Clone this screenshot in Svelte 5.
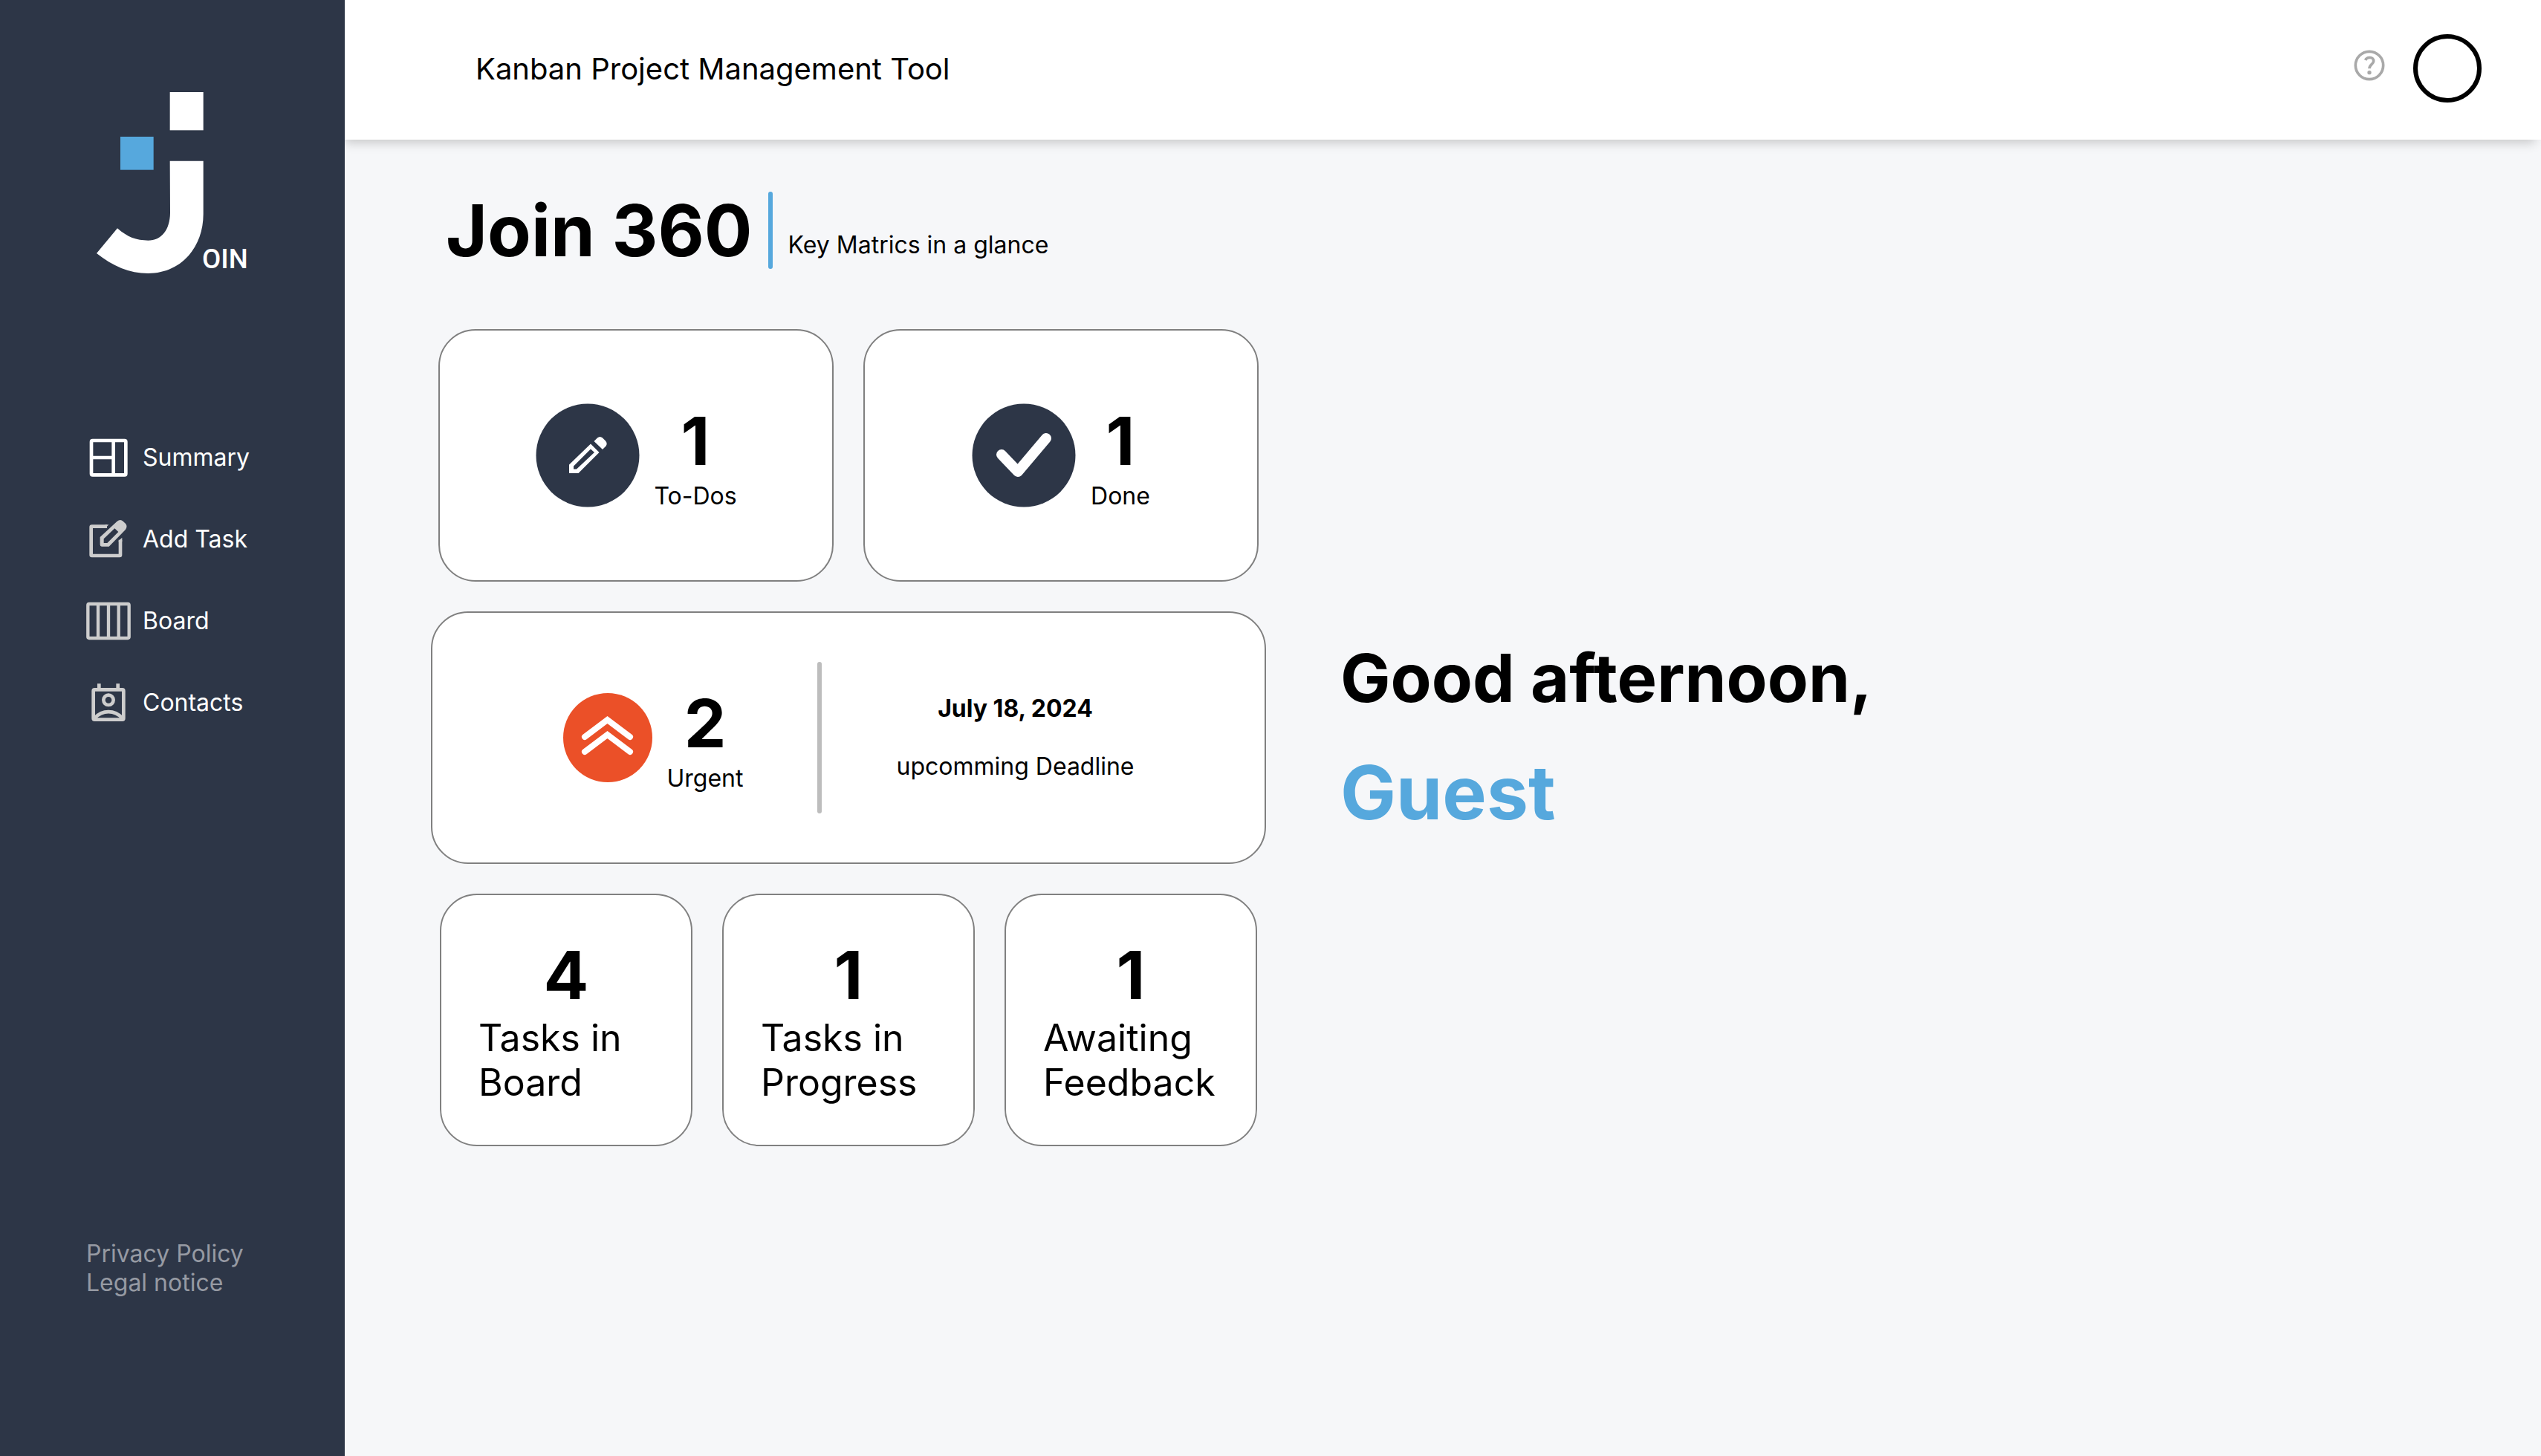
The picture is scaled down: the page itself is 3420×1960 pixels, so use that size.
<script>
  const nav = [
    { id: 'summary', label: 'Summary', box: '78 78 180 180' },
    { id: 'add', label: 'Add Task', box: '78 408 180 180' },
    { id: 'board', label: 'Board', box: '78 738 180 180' },
    { id: 'contacts', label: 'Contacts', box: '78 1068 180 180' }
  ];

  const totals = [
    { count: 4, label: 'Tasks in Board' },
    { count: 1, label: 'Tasks in Progress' },
    { count: 1, label: 'Awaiting Feedback' }
  ];
</script>

<div class="app">
  <aside class="sidebar">
    <svg class="logo" viewBox="90 72 630 780" role="img" aria-label="Join">
      <rect x="386" y="72" width="135" height="154" fill="#fff" />
      <rect x="186" y="252" width="134" height="134" fill="#56a8dd" />
      <path
        fill="#fff"
        d="M386 350H521V565C521 700 430 804 298 804C222 804 155 774 90 723L174 622C215 658 250 671 298 671C352 671 386 628 387 560Z"
      />
      <text x="516" y="784" class="logo-text">OIN</text>
    </svg>

    <nav class="nav">
      {#each nav as item}
        <a href="#{item.id}" class="nav-link">
          <svg class="nav-icon" viewBox={item.box} fill="none" aria-hidden="true">
            {#if item.id === 'summary'}
              <g stroke="#fff" stroke-width="14">
                <rect x="99" y="99" width="139" height="139" rx="5" />
                <path d="M188 99V238M99 168H188" />
              </g>
            {:else if item.id === 'add'}
              <path
                d="M162 446H101Q98 446 98 449V561Q98 564 101 564H213Q216 564 216 561V500"
                stroke="#cdcdcd"
                stroke-width="14"
              />
              <path fill="#cdcdcd" d="M155 453L169 439H155ZM209 507V504L223 491V507Z" />
              <path
                fill="#cdcdcd"
                fill-rule="evenodd"
                d="M134 489L203 425Q216 415 227 425L238 436Q246 447 236 460L170 527H141Q134 527 134 520ZM149 496V513H163L208 468L193 454Z"
              />
            {:else if item.id === 'board'}
              <g stroke="#cdcdcd" stroke-width="13">
                <rect x="85" y="759" width="166" height="138" rx="5" />
                <path d="M126 759V897M168 759V897M209 759V897" />
              </g>
            {:else}
              <g stroke="#cdcdcd" stroke-width="14">
                <rect x="107" y="1105" width="122" height="121" rx="5" />
                <path d="M130 1081V1105M206 1081V1105" />
                <circle cx="168" cy="1147" r="20" />
                <path d="M112 1220C144 1186 192 1186 224 1220" />
              </g>
            {/if}
          </svg>
          <span>{item.label}</span>
        </a>
      {/each}
    </nav>

    <footer class="legal">
      <a href="#privacy">Privacy Policy</a>
      <a href="#legal">Legal notice</a>
    </footer>
  </aside>

  <div class="page">
    <header class="topbar">
      <span class="app-title">Kanban Project Management Tool</span>
      <div class="actions">
        <button class="help" type="button" aria-label="Help">
          <svg viewBox="144 143 126 126" fill="none" stroke="#a9a9a9" stroke-width="11" aria-hidden="true">
            <circle cx="207" cy="206" r="56" />
            <path d="M191 185C197 170 225 171 224 189C223 202 207 203 207 219" />
            <circle cx="207" cy="235" r="8" fill="#a9a9a9" stroke="none" />
          </svg>
        </button>
        <button class="avatar" type="button" aria-label="Account"></button>
      </div>
    </header>

    <main class="main">
      <div class="heading">
        <h1>Join 360</h1>
        <span class="heading-bar"></span>
        <p>Key Matrics in a glance</p>
      </div>

      <div class="content">
        <section class="board">
          <div class="row">
            <a class="card medium" href="#todo">
              <svg class="badge" viewBox="0 0 140 140" aria-hidden="true">
                <circle cx="71" cy="70" r="69.5" fill="#2d3647" />
                <path
                  fill="#fff"
                  fill-rule="evenodd"
                  d="M46 94V82.5L75 54.5L86.5 66L58.5 94ZM52 84.5V88.5H56L80 66L75 61.5Z"
                />
                <path fill="#fff" d="M79.5 51L84 46.5Q87.5 43.5 91 46.5L95 50.5Q98 54 95.5 57.5L91 62Z" />
              </svg>
              <div class="stat">
                <strong>1</strong>
                <span>To-Dos</span>
              </div>
            </a>
            <a class="card medium" href="#done">
              <svg class="badge" viewBox="0 0 140 140" aria-hidden="true">
                <circle cx="70" cy="70" r="69.5" fill="#2d3647" />
                <path
                  d="M40 69L62 92L100 47"
                  fill="none"
                  stroke="#fff"
                  stroke-width="14"
                  stroke-linecap="round"
                  stroke-linejoin="round"
                />
              </svg>
              <div class="stat">
                <strong>1</strong>
                <span>Done</span>
              </div>
            </a>
          </div>

          <a class="card wide" href="#urgent">
            <div class="urgent">
              <svg class="badge-small" viewBox="0 0 120 120" aria-hidden="true">
                <circle cx="60" cy="60" r="60" fill="#eb5028" />
                <path
                  d="M29 59L59.5 36L90 59M29 79L59.5 56L90 79"
                  fill="none"
                  stroke="#fff"
                  stroke-width="8"
                  stroke-linecap="round"
                />
              </svg>
              <div class="stat">
                <strong>2</strong>
                <span>Urgent</span>
              </div>
            </div>
            <span class="divider"></span>
            <div class="deadline">
              <b>July 18, 2024</b>
              <span>upcomming Deadline</span>
            </div>
          </a>

          <div class="row">
            {#each totals as total}
              <a class="card small" href="#board">
                <strong>{total.count}</strong>
                <span>{total.label}</span>
              </a>
            {/each}
          </div>
        </section>

        <section class="greeting">
          <h2>Good afternoon,</h2>
          <p>Guest</p>
        </section>
      </div>
    </main>
  </div>
</div>

<style>
  :global(body) {
    margin: 0;
  }

  .app {
    display: flex;
    min-height: 100vh;
    font-family: Inter, 'Liberation Sans', sans-serif;
    font-size: 32px;
    color: #000;
    background: #f6f7f9;
  }

  .app * {
    box-sizing: border-box;
  }

  a {
    color: inherit;
    text-decoration: none;
  }

  h1,
  h2,
  p {
    margin: 0;
  }

  .sidebar {
    position: relative;
    z-index: 1;
    flex: none;
    display: flex;
    flex-direction: column;
    width: 464px;
    padding: 124px 116px 214px;
    color: #fff;
    background: #2d3647;
  }

  .logo {
    width: 210px;
    height: 260px;
    margin: 0 0 202px 14px;
    overflow: visible;
  }

  .logo-text {
    font-family: 'Liberation Sans Narrow', Roboto, sans-serif;
    font-size: 110px;
    font-weight: 500;
    fill: #fff;
  }

  .nav {
    display: flex;
    flex-direction: column;
    gap: 50px;
  }

  .nav-link {
    display: flex;
    align-items: center;
    gap: 16px;
    line-height: 38px;
    white-space: nowrap;
  }

  .nav-icon {
    flex: none;
    width: 60px;
    height: 60px;
  }

  .legal {
    display: flex;
    flex-direction: column;
    margin-top: auto;
    color: #969aa3;
  }

  .page {
    flex: 1;
    min-width: 0;
  }

  .topbar {
    display: flex;
    align-items: center;
    justify-content: space-between;
    height: 188px;
    padding: 0 80px 4px 176px;
    background: #fff;
    box-shadow: -4px 8px 14px -4px rgba(0, 0, 0, 0.2);
  }

  .app-title {
    font-size: 40px;
  }

  .actions {
    display: flex;
    align-items: center;
    gap: 38px;
  }

  button {
    padding: 0;
    border: 0;
    background: none;
    cursor: pointer;
  }

  .help {
    padding-bottom: 8px;
  }

  .help svg {
    display: block;
    width: 42px;
    height: 42px;
  }

  .avatar {
    width: 92px;
    height: 92px;
    border: 6px solid #000;
    border-radius: 50%;
    background: #fff;
  }

  .main {
    padding: 64px 116px;
  }

  .heading {
    display: flex;
    align-items: center;
    gap: 21px;
    margin: 0 0 75px 20px;
  }

  .heading h1 {
    font-size: 96px;
    font-weight: 700;
  }

  .heading p {
    padding-top: 39px;
  }

  .heading-bar {
    width: 6px;
    height: 104px;
    border-radius: 3px;
    background: #56a8dd;
  }

  .content {
    display: flex;
    align-items: center;
    gap: 100px;
  }

  .board {
    flex: none;
    display: flex;
    flex-direction: column;
    align-items: center;
    gap: 40px;
  }

  .row {
    display: flex;
    gap: 40px;
  }

  .card {
    display: flex;
    align-items: center;
    justify-content: center;
    height: 340px;
    border: 2px solid #808080;
    border-radius: 50px;
    background: #fff;
  }

  .card strong {
    font-size: 90px;
    font-weight: 700;
    line-height: 108px;
    text-align: center;
  }

  .medium {
    gap: 20px;
    width: 532px;
  }

  .badge {
    width: 140px;
    height: 140px;
    overflow: visible;
  }

  .badge-small {
    width: 120px;
    height: 120px;
  }

  .stat {
    display: flex;
    flex-direction: column;
    align-items: center;
  }

  .wide {
    gap: 100px;
    width: 1124px;
  }

  .urgent {
    display: flex;
    align-items: center;
    gap: 20px;
  }

  .divider {
    width: 6px;
    height: 204px;
    border-radius: 3px;
    background: #bdbdbd;
  }

  .deadline {
    display: flex;
    flex-direction: column;
    align-items: center;
    gap: 40px;
    line-height: 38px;
  }

  .deadline b {
    font-weight: 700;
  }

  .small {
    flex-direction: column;
    align-items: stretch;
    width: 340px;
    padding: 0 50px;
  }

  .small span {
    font-size: 50px;
    line-height: 60px;
  }

  .greeting {
    display: flex;
    flex-direction: column;
    gap: 40px;
    font-weight: 700;
    white-space: nowrap;
  }

  .greeting h2 {
    font-size: 90px;
    font-weight: 700;
    line-height: 108px;
  }

  .greeting p {
    font-size: 100px;
    line-height: 120px;
    color: #56a8dd;
  }
</style>
